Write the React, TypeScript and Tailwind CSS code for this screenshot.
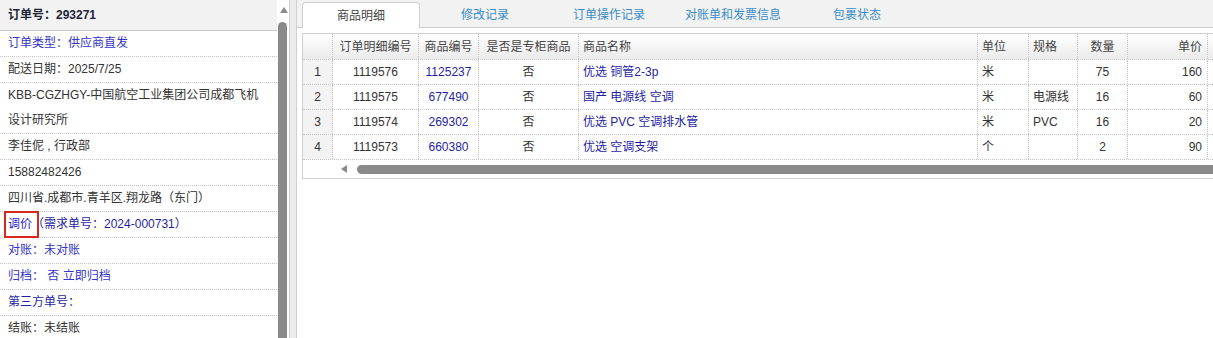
import React from "react";

const cols = [
  { w: "w-[30px]", head: "", align: "justify-center", tone: "text-[#333]", cell: "bg-[#f3f3f3]" },
  { w: "w-[86px]", head: "订单明细编号", align: "justify-center", tone: "text-[#333]", cell: "" },
  { w: "w-[60px]", head: "商品编号", align: "justify-center", tone: "text-[#1f1fa6]", cell: "" },
  { w: "w-[100px]", head: "是否是专柜商品", align: "justify-center", tone: "text-[#333]", cell: "" },
  { w: "w-[399px]", head: "商品名称", align: "justify-start pl-1", tone: "text-[#1f1fa6]", cell: "" },
  { w: "w-[51px]", head: "单位", align: "justify-start pl-1", tone: "text-[#333]", cell: "" },
  { w: "w-[49px]", head: "规格", align: "justify-start pl-1", tone: "text-[#333]", cell: "" },
  { w: "w-[50px]", head: "数量", align: "justify-center", tone: "text-[#333]", cell: "" },
  { w: "w-[80px]", head: "单价", align: "justify-end pr-[5px]", tone: "text-[#333]", cell: "" },
  { w: "w-[60px]", head: "", align: "justify-end pr-[5px]", tone: "text-[#333]", cell: "" },
];

const rows = [
  ["1", "1119576", "1125237", "否", "优选 铜管2-3p", "米", "", "75", "160", ""],
  ["2", "1119575", "677490", "否", "国产 电源线 空调", "米", "电源线", "16", "60", ""],
  ["3", "1119574", "269302", "否", "优选 PVC 空调排水管", "米", "PVC", "16", "20", ""],
  ["4", "1119573", "660380", "否", "优选 空调支架", "个", "", "2", "90", ""],
];

const tabs = ["商品明细", "修改记录", "订单操作记录", "对账单和发票信息", "包裹状态"];

function InfoRow({ children, tone = "text-[#333]" }: { children: React.ReactNode; tone?: string }) {
  return (
    <div className={`relative border-b border-dotted border-[#c4c4c4] pl-2 pr-[14px] leading-[25px] ${tone}`}>
      {children}
    </div>
  );
}

function OrderInfo() {
  return (
    <div className="flex w-[289px] shrink-0">
      <div className="w-[277px] shrink-0">
        <div className="h-[31px] border-b border-[#c8c8c8] bg-[#f2f2f2] pl-2 font-bold leading-[30px] text-[#1f2638]">
          订单号：293271
        </div>
        <InfoRow tone="text-[#3434c8]">订单类型：供应商直发</InfoRow>
        <InfoRow>配送日期：2025/7/25</InfoRow>
        <InfoRow>KBB-CGZHGY-中国航空工业集团公司成都飞机设计研究所</InfoRow>
        <InfoRow>李佳伲 , 行政部</InfoRow>
        <InfoRow>15882482426</InfoRow>
        <InfoRow>四川省.成都市.青羊区.翔龙路（东门）</InfoRow>
        <InfoRow tone="text-[#1f1fa6]">
          <span className="text-[#2b2bd0]">调价</span>（需求单号：2024-000731）
          {/* red highlight box drawn over the label */}
          <span className="absolute -top-px left-1 h-[27px] w-[35px] border-2 border-[#d62a20]" />
        </InfoRow>
        <InfoRow tone="text-[#3434c8]">对账：未对账</InfoRow>
        <InfoRow tone="text-[#3434c8]">归档：&nbsp;否 立即归档</InfoRow>
        <InfoRow tone="text-[#1f1fa6]">第三方单号：</InfoRow>
        <InfoRow>结账：未结账</InfoRow>
      </div>
      <div className="flex w-[12px] flex-col pl-px">
        <div className="flex h-[22px] items-start justify-center pt-[7px]">
          <div className="h-0 w-0 border-x-[4px] border-b-[6px] border-x-transparent border-b-[#8a8a8a]" />
        </div>
        <div className="w-[9px] flex-1 rounded-t-[5px] bg-[#8a8a8a]" />
      </div>
    </div>
  );
}

function Tabs() {
  return (
    <div className="flex h-[28px] gap-[6px] border-b border-[#cfcfcf] bg-[#f2f2f2] pl-[5px] pt-[2px]">
      {tabs.map((t, i) =>
        i === 0 ? (
          <div
            key={t}
            className="-mb-px flex h-[26px] w-[118px] shrink-0 items-center justify-center rounded-t-[4px] border border-b-0 border-[#cfcfcf] bg-white text-[#444]"
          >
            {t}
          </div>
        ) : (
          <div key={t} className="flex h-[25px] w-[118px] shrink-0 items-center justify-center text-[#3a8cc6]">
            {t}
          </div>
        )
      )}
    </div>
  );
}

function ItemTable() {
  return (
    <div className="ml-[5px] mt-[5px] w-[1000px] border border-[#cfcfcf]">
      <div className="flex h-[25px] bg-gradient-to-b from-white to-[#ebebeb] text-[#444]">
        {cols.map((c, i) => (
          <div key={i} className={`flex shrink-0 items-center border-r border-dotted border-[#c4c4c4] ${c.w} ${c.align}`}>
            {c.head}
          </div>
        ))}
      </div>
      {rows.map((r) => (
        <div key={r[0]} className="flex h-[25px] border-t border-dotted border-[#c4c4c4]">
          {r.map((v, i) => (
            <div
              key={i}
              className={`flex shrink-0 items-center border-r border-dotted border-[#c4c4c4] ${cols[i].w} ${cols[i].align} ${cols[i].tone} ${cols[i].cell}`}
            >
              {v}
            </div>
          ))}
        </div>
      ))}
      <div className="flex h-[19px] items-center border-t border-dotted border-[#c4c4c4]">
        <div className="w-[38px] shrink-0" />
        <div className="h-0 w-0 border-y-[4px] border-r-[6px] border-y-transparent border-r-[#8a8a8a]" />
        <div className="ml-[10px] h-[9px] flex-1 rounded-l-[5px] bg-[#8a8a8a]" />
      </div>
    </div>
  );
}

export default function App() {
  return (
    <div className="flex h-[338px] w-[1213px] overflow-hidden bg-white text-[12px] [font-family:'Liberation_Sans','Noto_Sans_CJK_SC',sans-serif]">
      <OrderInfo />
      <div className="w-px shrink-0 bg-[#cfcfcf]" />
      <div className="w-[6px] shrink-0 bg-[#ececec]" />
      <div className="min-w-0 flex-1 overflow-hidden border-l border-[#cfcfcf]">
        <Tabs />
        <ItemTable />
      </div>
    </div>
  );
}
